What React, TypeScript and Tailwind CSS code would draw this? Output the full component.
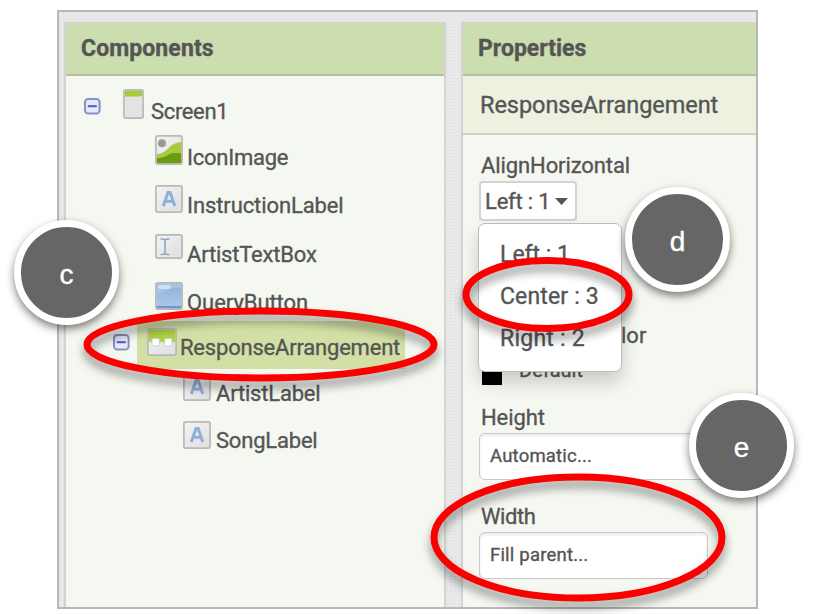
import type { ReactNode } from 'react';

const LINEN =
  'bg-[#eaeaea] bg-[repeating-linear-gradient(0deg,rgba(0,0,0,0.035)_0px,transparent_1px,transparent_3px),repeating-linear-gradient(90deg,rgba(0,0,0,0.035)_0px,transparent_1px,transparent_4px)]';

function Collapse() {
  return (
    <svg className="block" width="17" height="17" viewBox="0 0 17 17">
      <rect x="1" y="1" width="14.6" height="14.6" rx="3.2" fill="#e6e9f6" stroke="#8790c8" strokeWidth="2" />
      <path d="M3.8 8.2h9" stroke="#4a55e0" strokeWidth="2" />
    </svg>
  );
}

function Frame({ w, h, children }: { w: number; h: number; children?: ReactNode }) {
  return (
    <svg className="block" width={w} height={h} viewBox={`0 0 ${w} ${h}`}>
      <defs>
        <linearGradient id="tile" x1="0" y1="0" x2="1" y2="1">
          <stop offset="0" stopColor="#f3f3f3" />
          <stop offset="1" stopColor="#dedede" />
        </linearGradient>
        <linearGradient id="lime" x1="0" y1="0" x2="0" y2="1">
          <stop offset="0" stopColor="#a3c93a" />
          <stop offset="1" stopColor="#b4d44c" />
        </linearGradient>
        <linearGradient id="sky" x1="0" y1="0" x2="0" y2="1">
          <stop offset="0" stopColor="#8fb0dc" />
          <stop offset="1" stopColor="#b0c9ea" />
        </linearGradient>
      </defs>
      <rect x="0.9" y="0.9" width={w - 1.8} height={h - 1.8} rx="2" fill="url(#tile)" />
      {children}
      <rect x="0.9" y="0.9" width={w - 1.8} height={h - 1.8} rx="2" fill="none" stroke="#b9b9b9" strokeWidth="1.7" />
    </svg>
  );
}

function ScreenIcon() {
  return (
    <Frame w={21} h={30}>
      <rect x="1.8" y="1.8" width="17.4" height="26.4" fill="#e3e3e3" />
      <path d="M1.8 1.8h17.4v5q-4 1.200-9 .8-5-.4-8.400.2z" fill="#a8cb3c" />
    </Frame>
  );
}

function ImageIcon() {
  return (
    <Frame w={28} h={30}>
      <circle cx="7" cy="8.200" r="4" fill="#999" />
      <path d="M1.600 19c6-.5 8-2 13-7 4-3.500 7-4.500 12-5v21.400h-25z" fill="#a9cb40" />
      <path d="M1.600 23c5 .5 8-1 12-3.500 4-2 8-1.500 13-1v9.900h-25z" fill="#6a9c10" />
    </Frame>
  );
}

function LabelIcon() {
  return (
    <Frame w={28} h={28}>
      <path d="M8.300 21L13 7.600h2.200L19.800 21M10 16.200h8" fill="none" stroke="#8eaedb" strokeWidth="3" />
    </Frame>
  );
}

function TextBoxIcon() {
  return (
    <Frame w={28} h={25}>
      <path d="M5.500 5q3.500-.2 4.500 1 1-1.200 4.500-1M10 6v13.500M5.500 20.500q3.500.2 4.500-1 1 1.200 4.500 1" fill="none" stroke="#8da5c8" strokeWidth="1.600" />
    </Frame>
  );
}

function ButtonIcon() {
  return (
    <Frame w={28} h={28}>
      <rect x="1.600" y="1.600" width="24.800" height="24.800" fill="url(#sky)" />
      <path d="M1.600 19Q3 10 13 7.500t13.400-1.500V1.600H1.600z" fill="#a6c2e6" />
      <rect x="3" y="3" width="13" height="4" rx="2" fill="#d0dff3" />
      <path d="M1.600 25.200h24.800" stroke="#6f97cf" strokeWidth="2.600" />
    </Frame>
  );
}

function ArrangementIcon() {
  return (
    <Frame w={30} h={28}>
      <rect x="1.600" y="1.600" width="26.800" height="12.600" fill="url(#lime)" />
      <rect x="5" y="10.600" width="7.400" height="7.400" rx="1.500" fill="#fff" stroke="#cfcfcf" />
      <rect x="17.500" y="10.600" width="7.400" height="7.400" rx="1.500" fill="#fff" stroke="#cfcfcf" />
    </Frame>
  );
}

function Row({ row, icon, text, children, label }: { row: string; icon: string; text: string; children: ReactNode; label: string }) {
  return (
    <div className={`flex items-start ${row}`}>
      <div className={`shrink-0 ${icon}`}>{children}</div>
      <div className={`whitespace-nowrap text-[22px] leading-[28px] ${text}`}>{label}</div>
    </div>
  );
}

function Header({ children, className }: { children: ReactNode; className: string }) {
  return (
    <div className={`h-[53px] border-b-2 border-[#b5bfa4] bg-[#ccddb0] text-[23px] leading-[28px] font-bold ${className}`}>
      {children}
    </div>
  );
}

function Components() {
  return (
    <section className="w-[382px] border-x-2 border-t border-[#d3d3d3] bg-[#f5f8f1]">
      <Header className="pt-[12px] pl-[15px] tracking-[0.1px]">Components</Header>
      <div className="pt-[14px]">
        <div className="flex h-[45px] pl-[18px]">
          <div className="pt-[8px]"><Collapse /></div>
          <Row row="pl-[22px]" icon="w-[28px] -mt-px" text="mt-[8px] tracking-[-0.35px]" label="Screen1"><ScreenIcon /></Row>
        </div>
        <Row row="h-[48px] pl-[89px]" icon="w-[32px]" text="mt-[9px] tracking-[-0.25px]" label="IconImage"><ImageIcon /></Row>
        <Row row="h-[50px] pl-[89px]" icon="w-[32px] mt-[2px]" text="mt-[9px] tracking-[-0.1px]" label="InstructionLabel"><LabelIcon /></Row>
        <Row row="h-[47px] pl-[89px]" icon="w-[32px] mt-px" text="mt-[8px] tracking-[-0.2px]" label="ArtistTextBox"><TextBoxIcon /></Row>
        <Row row="h-[41px] pl-[89px]" icon="w-[32px] mt-[2px]" text="mt-[9px] tracking-[-0.05px]" label="QueryButton"><ButtonIcon /></Row>
        <div className="flex h-[48px] pl-[47px]">
          <div className="w-[24px] pt-[13px]"><Collapse /></div>
          <Row row="w-[268px] bg-[#d3e0a5] pl-[10px]" icon="w-[33px] mt-[7px]" text="mt-[13px] tracking-[-0.2px]" label="ResponseArrangement"><ArrangementIcon /></Row>
        </div>
        <Row row="h-[49px] pl-[117px]" icon="w-[33px] mt-[4px]" text="mt-[11px] tracking-[-0.2px]" label="ArtistLabel"><LabelIcon /></Row>
        <Row row="h-[48px] pl-[117px]" icon="w-[33px] mt-[3px]" text="mt-[9px] tracking-[-0.2px]" label="SongLabel"><LabelIcon /></Row>
      </div>
    </section>
  );
}

function DropDown() {
  return (
    <div className="absolute top-[42px] -left-px h-[149px] w-[144px] rounded-[7px] border border-[#bdbdbd] bg-white pt-[17px] pl-[21px] text-[23px] leading-[28px] shadow-[0_10px_18px_rgba(0,0,0,0.18)]">
      <div className="h-[42px]">Left : 1</div>
      <div className="h-[42px] tracking-[0.15px]">Center : 3</div>
      <div className="h-[42px] tracking-[0.25px]">Right : 2</div>
    </div>
  );
}

function Field({ children }: { children: ReactNode }) {
  return (
    <div className="h-[47px] w-[229px] rounded-[6px] border-[1.500px] border-[#c9c9c9] bg-white pt-[10px] pl-[10px] text-[18.500px] leading-[24px] tracking-[0.2px] shadow-[inset_0_2px_3px_rgba(0,0,0,0.08)]">
      {children}
    </div>
  );
}

function Properties() {
  return (
    <section className="min-w-0 flex-1 border-t border-l-2 border-[#d3d3d3] bg-[#f5f8f1]">
      <Header className="pt-[12px] pl-[15px]">Properties</Header>
      <div className="h-[59px] border-b-2 border-[#cfd1cb] bg-[#edf1e0] pt-[15px] pl-[17px] text-[23.500px] leading-[28px] tracking-[-0.05px]">
        ResponseArrangement
      </div>
      <div className="pt-[17px] pl-[16px] text-[22px]">
        <div className="h-[29px] pl-[2px] leading-[28px] tracking-[-0.1px]">AlignHorizontal</div>
        <div className="relative z-10 h-[40px] w-[98px]">
          <div className="flex h-[40px] w-[98px] items-center gap-[5px] rounded-[4px] border-2 border-[#d2d2d2] bg-white pl-[4px] text-[22px]">
            <span className="whitespace-nowrap tracking-[-0.2px]">Left : 1</span>
            <svg width="13" height="8" viewBox="0 0 13 8"><path d="M0 1h13L6.500 8z" fill="#555" /></svg>
          </div>
          <DropDown />
        </div>
        <div className="mt-[101px] flex h-[36px] items-start pl-[142px]">
          <span className="leading-[28px]">lor</span>
        </div>
        <div className="flex h-[46px] pl-[3px]">
          <div className="mt-[7px] h-[20px] w-[20px] bg-black" />
          <span className="pl-[17px] text-[20px] leading-[25px]">Default</span>
        </div>
        <div className="h-[29px] pl-[2px] leading-[28px] tracking-[-0.1px]">Height</div>
        <Field>Automatic...</Field>
        <div className="mt-[23px] h-[29px] pl-[2px] leading-[28px] tracking-[-0.4px]">Width</div>
        <Field>Fill parent...</Field>
      </div>
    </section>
  );
}

function Badge({ className, children }: { className: string; children: ReactNode }) {
  return (
    <div className={`absolute z-20 flex size-[105px] items-center justify-center rounded-full border-[7px] border-white bg-[#666] pt-[4px] font-['Liberation_Sans',sans-serif] text-[28px] leading-[30px] text-white shadow-[0_4px_9px_rgba(0,0,0,0.5)] ${className}`}>
      {children}
    </div>
  );
}

function Rings() {
  return (
    <svg className="pointer-events-none absolute top-0 left-0 z-10 drop-shadow-[0_7px_5px_rgba(0,0,0,0.42)]" width="816" height="614" fill="none" stroke="#fb0000" strokeWidth="7">
      <ellipse cx="260.500" cy="344.500" rx="173.500" ry="33.500" />
      <ellipse cx="547.500" cy="294.500" rx="81.500" ry="34" />
      <ellipse cx="578" cy="537.500" rx="144" ry="60.500" />
    </svg>
  );
}

export default function App() {
  return (
    <div className="relative h-[614px] w-[816px] overflow-hidden bg-white pt-[10px] pl-[57px] font-['Roboto',sans-serif] text-[#555] [-webkit-text-stroke:0.35px_currentColor]">
      <main className={`flex h-[599px] w-[701px] gap-[15px] border-2 border-[#b8b8b8] pt-[10px] pl-[5px] ${LINEN}`}>
        <Components />
        <Properties />
      </main>
      <Rings />
      <Badge className="top-[220px] left-[14px]">c</Badge>
      <Badge className="top-[187px] left-[625px]">d</Badge>
      <Badge className="top-[393px] left-[689px]">e</Badge>
    </div>
  );
}
